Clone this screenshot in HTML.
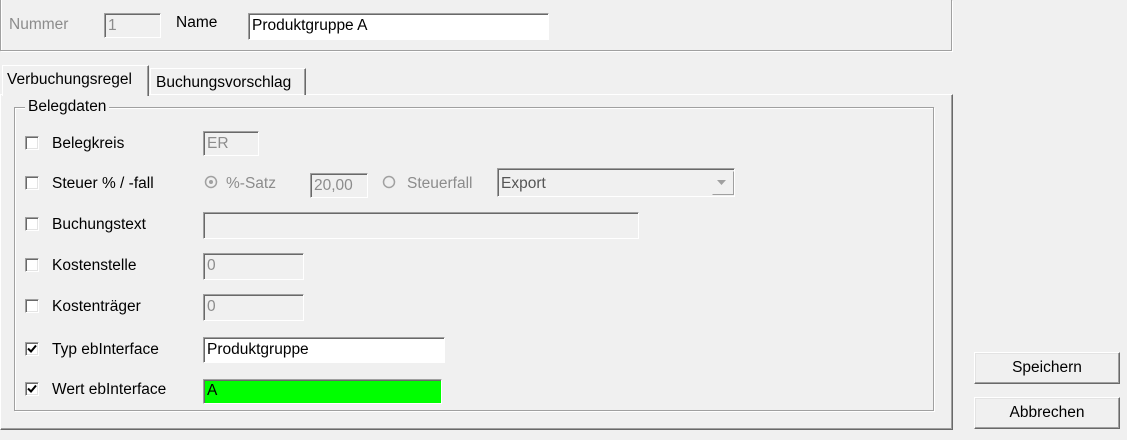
<!DOCTYPE html><html><head><style>
body{margin:0;width:1127px;height:440px;background:#f0f0f0;font-family:"Liberation Sans",Arial,sans-serif;font-size:15.5px;color:#000;position:relative;overflow:hidden}
.a{position:absolute}
.t{position:absolute;white-space:nowrap;line-height:17px}
.g{color:#8c8c8c}
.f{position:absolute;box-sizing:border-box;border-top:1px solid #a0a0a0;border-left:1px solid #a0a0a0;border-right:1px solid #fff;border-bottom:1px solid #fff;box-shadow:inset 1px 1px 0 #696969;padding:3px 0 0 3px;line-height:17px;white-space:nowrap;overflow:hidden}
.dis{background:#f0f0f0;color:#8c8c8c}
.w{background:#fff}
.cb{position:absolute;width:14px;height:14px;box-sizing:border-box;background:#fff;border-top:1px solid #a0a0a0;border-left:1px solid #a0a0a0;border-right:1px solid #fff;border-bottom:1px solid #fff;box-shadow:inset 1px 1px 0 #696969,inset -1px -1px 0 #e3e3e3}
.btn{position:absolute;box-sizing:border-box;width:146px;height:32px;border:1px solid;border-color:#fff #696969 #696969 #fff;box-shadow:inset -1px -1px 0 #a0a0a0,inset 1px 1px 0 #e3e3e3;text-align:center;line-height:29px}
</style></head><body>
<div class="a" style="left:0;top:0;width:950px;height:50px;border:1px solid #a0a0a0;border-top:none;box-shadow:1px 1px 0 #fff,inset 1px 0 0 #fff"></div>
<div class="t g" style="left:9px;top:16px">Nummer</div>
<div class="f dis" style="left:104px;top:13px;width:57px;height:25px">1</div>
<div class="t" style="left:176px;top:14px">Name</div>
<div class="f w" style="left:248px;top:13px;width:301px;height:27px">Produktgruppe A</div>

<div class="a" style="left:0;top:94px;width:951px;height:334px;border:1px solid;border-color:#fff #696969 #696969 #fff;box-shadow:inset -1px -1px 0 #a0a0a0"></div>
<div class="a" style="left:2px;top:65px;width:145px;height:30px;background:#f0f0f0;border:1px solid;border-color:#fff #696969 transparent #fff;border-bottom:none;box-shadow:inset -1px 0 0 #a0a0a0"></div>
<div class="t" style="left:7px;top:71px">Verbuchungsregel</div>
<div class="a" style="left:150px;top:68px;width:154px;height:26px;border:1px solid;border-color:#fff #696969 transparent #fff;border-bottom:none;box-shadow:inset -1px 0 0 #a0a0a0"></div>
<div class="t" style="left:156px;top:74px">Buchungsvorschlag</div>

<div class="a" style="left:14px;top:107px;width:918px;height:302px;border:1px solid #a0a0a0;box-shadow:1px 1px 0 #fff,inset 1px 1px 0 #fff"></div>
<div class="t" style="left:25px;top:98px;background:#f0f0f0;padding:0 3px">Belegdaten</div>

<div class="cb" style="left:25px;top:136px"></div><div class="t" style="left:52px;top:135px">Belegkreis</div>
<div class="f dis" style="left:203px;top:131px;width:56px;height:25px">ER</div>

<div class="cb" style="left:25px;top:176px"></div><div class="t" style="left:52px;top:175px">Steuer % / -fall</div>
<svg class="a" style="left:204px;top:175px" width="14" height="14"><circle cx="7" cy="7" r="5.5" fill="#f0f0f0" stroke="#a0a0a0" stroke-width="1.5"/><circle cx="7" cy="7" r="2" fill="#a0a0a0"/></svg>
<div class="t g" style="left:226px;top:175px">%-Satz</div>
<div class="f dis" style="left:310px;top:173px;width:58px;height:25px">20,00</div>
<svg class="a" style="left:382px;top:175px" width="14" height="14"><circle cx="7" cy="7" r="5.5" fill="#f0f0f0" stroke="#a0a0a0" stroke-width="1.5"/></svg>
<div class="t g" style="left:407px;top:175px">Steuerfall</div>
<div class="f dis" style="left:497px;top:168px;width:238px;height:29px;color:#555;padding-top:6px">Export</div>
<div class="a" style="left:712px;top:171px;width:20px;height:22px;background:#f0f0f0;border:1px solid;border-color:#f0f0f0 #a0a0a0 #a0a0a0 #f0f0f0"></div>
<svg class="a" style="left:717px;top:180px" width="10" height="6"><path d="M0 0H9L4.5 5Z" fill="#a0a0a0"/></svg>

<div class="cb" style="left:25px;top:217px"></div><div class="t" style="left:52px;top:216px">Buchungstext</div>
<div class="f dis" style="left:203px;top:212px;width:436px;height:27px"></div>

<div class="cb" style="left:25px;top:258px"></div><div class="t" style="left:52px;top:257px">Kostenstelle</div>
<div class="f dis" style="left:203px;top:253px;width:101px;height:27px">0</div>

<div class="cb" style="left:25px;top:299px"></div><div class="t" style="left:52px;top:298px">Kostenträger</div>
<div class="f dis" style="left:203px;top:294px;width:101px;height:27px">0</div>

<div class="cb" style="left:25px;top:342px"></div><div class="t" style="left:52px;top:341px">Typ ebInterface</div>
<svg class="a" style="left:27px;top:344px" width="10" height="10"><path d="M1 4.5L4 7.5L9 1.5" stroke="#000" stroke-width="2" fill="none"/></svg>
<div class="f w" style="left:203px;top:337px;width:242px;height:26px">Produktgruppe</div>

<div class="cb" style="left:25px;top:382px"></div><div class="t" style="left:52px;top:381px">Wert ebInterface</div>
<svg class="a" style="left:27px;top:384px" width="10" height="10"><path d="M1 4.5L4 7.5L9 1.5" stroke="#000" stroke-width="2" fill="none"/></svg>
<div class="f" style="left:203px;top:379px;width:239px;height:25px;background:#00ff00;padding-top:2px">A</div>

<div class="btn" style="left:974px;top:352px">Speichern</div>
<div class="btn" style="left:974px;top:397px">Abbrechen</div>
</body></html>
